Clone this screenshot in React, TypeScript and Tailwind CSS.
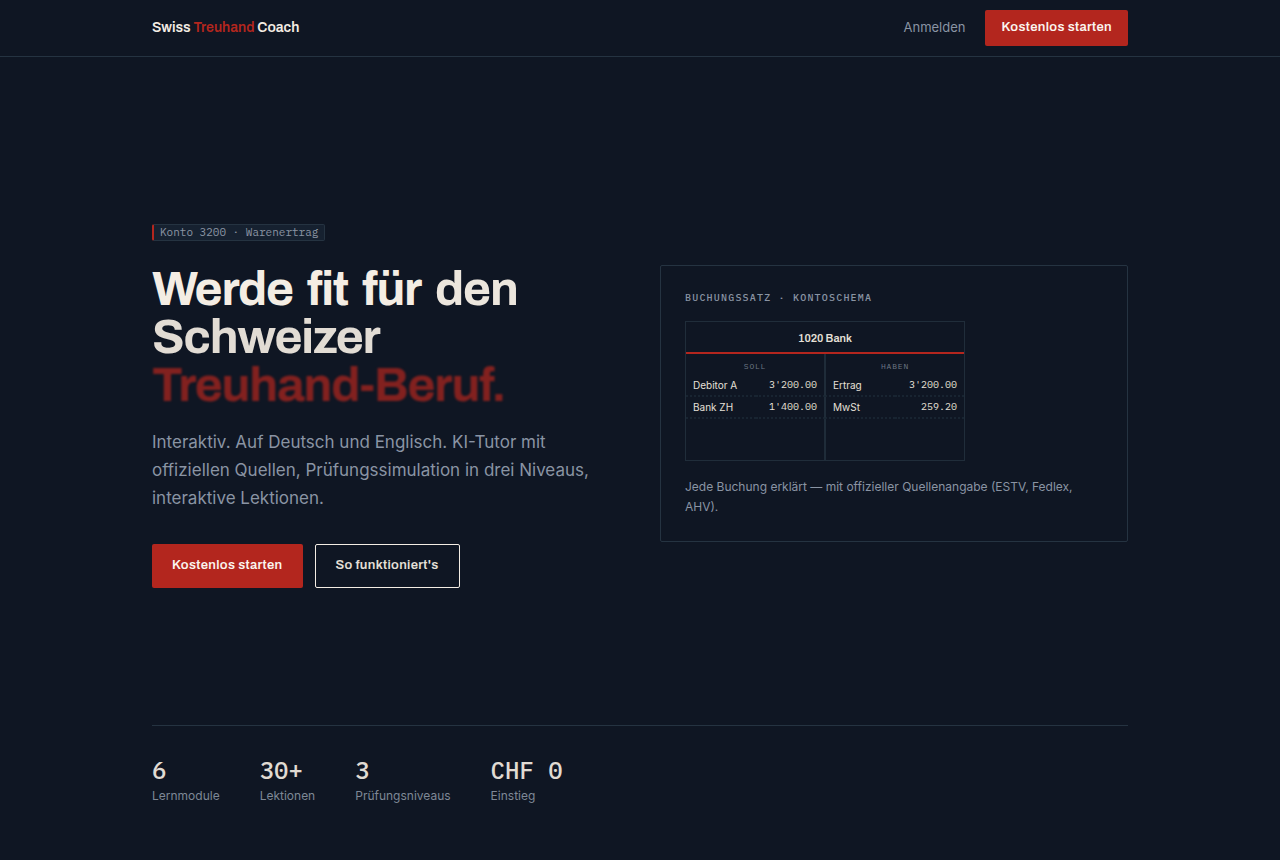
import React from 'react';

interface Booking {
  debit: string;
  debitAmount: string;
  credit: string;
  creditAmount: string;
}

const bookings: Booking[] = [
  { debit: 'Debitor A', debitAmount: "3'200.00", credit: 'Ertrag', creditAmount: "3'200.00" },
  { debit: 'Bank ZH', debitAmount: "1'400.00", credit: 'MwSt', creditAmount: '259.20' },
];

const stats = [
  { value: '6', label: 'Lernmodule' },
  { value: '30+', label: 'Lektionen' },
  { value: '3', label: 'Prüfungsniveaus' },
  { value: 'CHF 0', label: 'Einstieg' },
];

function Header() {
  return (
    <header className="border-b border-[#253341]">
      <div className="max-w-5xl mx-auto h-14 px-6 flex items-center justify-between">
        <a href="#" className="font-['Archivo','Liberation_Sans',sans-serif] font-semibold text-[14px] leading-5 text-[#f4ede4]">
          Swiss <span className="text-[#b3261e]">Treuhand</span> Coach
        </a>
        <nav className="flex items-center gap-5">
          <a href="#login" className="text-[13px] text-[#8a94a3]">Anmelden</a>
          <button className="h-9 px-4 rounded-xs bg-[#b3261e] font-['Archivo','Liberation_Sans',sans-serif] font-semibold text-[13px] tracking-wide text-[#fbf5ef]">
            Kostenlos starten
          </button>
        </nav>
      </div>
    </header>
  );
}

function TAccount() {
  return (
    <table className="w-[280px] h-[140px] table-fixed border-separate border-spacing-0 border border-[#202d3a] text-[#e6e0d8]">
      <thead>
        <tr className="h-8">
          <th colSpan={4} className="p-0 pt-[2px] border-b-2 border-[#b3261e] font-['Archivo','Liberation_Sans',sans-serif] font-semibold text-[11px] leading-4">
            1020 Bank
          </th>
        </tr>
        <tr className="h-[21px] font-['IBM_Plex_Mono','Liberation_Mono',monospace] text-[8px] leading-3 text-[#6d7785] tracking-widest">
          <th colSpan={2} className="p-0 pt-1 border-r border-[#1f2c39] font-normal">SOLL</th>
          <th colSpan={2} className="p-0 pt-1 border-l border-[#1f2c39] font-normal">HABEN</th>
        </tr>
      </thead>
      <tbody>
        {bookings.map((b) => (
          <tr key={b.debit} className="h-[22px] text-[10px] leading-4">
            <td className="p-0 pl-[7px] border-b-2 border-dotted border-[#182431]">{b.debit}</td>
            <td className="p-0 pr-[7px] border-b-2 border-dotted border-[#182431] border-r [border-right-style:solid] border-r-[#1f2c39] text-right font-['IBM_Plex_Mono','Liberation_Mono',monospace]">
              {b.debitAmount}
            </td>
            <td className="p-0 pl-[7px] border-b-2 border-dotted border-[#182431] border-l [border-left-style:solid] border-l-[#1f2c39]">{b.credit}</td>
            <td className="p-0 pr-[7px] border-b-2 border-dotted border-[#182431] text-right font-['IBM_Plex_Mono','Liberation_Mono',monospace]">
              {b.creditAmount}
            </td>
          </tr>
        ))}
        <tr>
          <td colSpan={2} className="p-0 border-r border-[#1f2c39]"></td>
          <td colSpan={2} className="p-0 border-l border-[#1f2c39]"></td>
        </tr>
      </tbody>
    </table>
  );
}

function Hero() {
  return (
    <section className="pt-[161px] pb-[137px] grid md:grid-cols-2 gap-10 items-center">
      <div>
        <div className="flex pt-[6px] mb-6">
          <span className="px-[6px] rounded-xs border border-l-2 border-[#253341] border-l-[#b3261e] bg-[#162130] font-['IBM_Plex_Mono','Liberation_Mono',monospace] text-[11px] leading-[15px] text-[#8a94a3]">
            Konto 3200 · Warenertrag
          </span>
        </div>
        <h1 className="flex flex-wrap gap-x-3.5 font-['Archivo','Liberation_Sans',sans-serif] font-bold text-5xl leading-[48px] tracking-tight text-[#f4ede4]">
          <span>Werde</span> <span>fit</span> <span>für</span> <span className="opacity-97">den</span>{' '}
          <span className="opacity-92">Schweizer</span>{' '}
          <span className="text-[#b3261e] opacity-70 blur-[1px]">Treuhand-Beruf.</span>
        </h1>
        <p className="mt-[19px] text-[17px] leading-7 text-[#8a94a3]">
          Interaktiv. Auf Deutsch und Englisch. KI-Tutor mit offiziellen Quellen, Prüfungssimulation in drei Niveaus,
          interaktive Lektionen.
        </p>
        <div className="mt-8 flex flex-wrap gap-3 font-['Archivo','Liberation_Sans',sans-serif] font-semibold text-[13px] tracking-wide">
          <button className="h-11 px-5 rounded-xs bg-[#b3261e] text-[#fbf5ef]">Kostenlos starten</button>
          <button className="h-11 px-5 rounded-xs border border-[#f4ede4] text-[#e6e0d8]">So funktioniert's</button>
        </div>
      </div>

      {/* Booking example */}
      <div className="rounded-xs border border-[#253341] p-6">
        <h2 className="mb-4 font-['IBM_Plex_Mono','Liberation_Mono',monospace] font-medium text-[10px] leading-[15px] tracking-[0.12em] text-[#8a94a3]">
          BUCHUNGSSATZ · KONTOSCHEMA
        </h2>
        <TAccount />
        <p className="mt-4 text-[12px] leading-5 text-[#8a94a3]">
          Jede Buchung erklärt — mit offizieller Quellenangabe (ESTV, Fedlex, AHV).
        </p>
      </div>
    </section>
  );
}

function Stats() {
  return (
    <dl className="border-t border-[#253341] pt-8 pb-14 flex flex-wrap gap-10">
      {stats.map((s) => (
        <div key={s.label} className="flex flex-col-reverse gap-1">
          <dt className="text-[12px] leading-5 text-[#7e8896]">{s.label}</dt>
          <dd className="font-['IBM_Plex_Mono','Liberation_Mono',monospace] font-medium text-2xl leading-6 text-[#e0dbd3]">{s.value}</dd>
        </div>
      ))}
    </dl>
  );
}

export default function App() {
  return (
    <div className="min-h-screen bg-[#0f1623] font-['Inter',sans-serif]">
      <Header />
      <main className="max-w-5xl mx-auto px-6">
        <Hero />
        <Stats />
      </main>
    </div>
  );
}
